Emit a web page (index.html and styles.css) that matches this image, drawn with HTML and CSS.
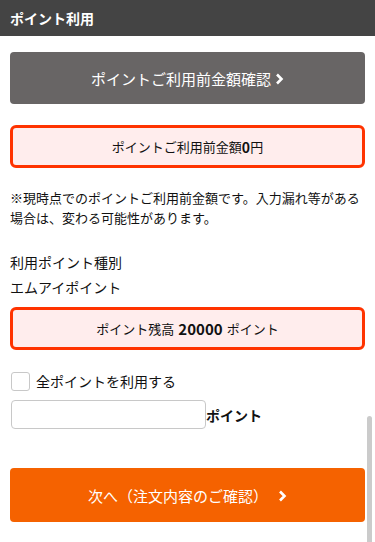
FILE: index.html
```html
<!DOCTYPE html>
<html lang="ja">
<head>
<meta charset="utf-8">
<title>ポイント利用</title>
<link rel="stylesheet" href="styles.css">
</head>
<body>
<div class="page">
  <header class="head">ポイント利用</header>
  <main class="content">
    <button class="btn btn-gray" type="button">ポイントご利用前金額確認<svg class="chev" viewBox="0 0 9 12" width="9" height="12"><polyline points="2,1.5 6.5,6 2,10.5" fill="none" stroke="#fff" stroke-width="2.6"/></svg></button>
    <div class="notice notice-amount">ポイントご利用前金額<span class="num">0</span>円</div>
    <p class="note">※現時点でのポイントご利用前金額です。入力漏れ等がある場合は、変わる可能性があります。</p>
    <p class="label">利用ポイント種別</p>
    <p class="label">エムアイポイント</p>
    <div class="notice notice-balance">ポイント残高 <span class="big">20000</span> ポイント</div>
    <label class="check-row"><span class="check"></span>全ポイントを利用する</label>
    <div class="input-row"><input class="point-input" type="text"><span class="unit">ポイント</span></div>
    <button class="btn btn-orange" type="button">次へ（注文内容のご確認）<svg class="chev chev-wide" viewBox="0 0 9 12" width="9" height="12"><polyline points="2,1.5 6.5,6 2,10.5" fill="none" stroke="#fff" stroke-width="2.6"/></svg></button>
  </main>
  <div class="scroll-thumb"></div>
</div>
</body>
</html>
```
FILE: styles.css
```css
* { box-sizing: border-box; }
html, body { margin: 0; padding: 0; }
body {
  font-family: "Noto Sans CJK JP", "Noto Sans", sans-serif;
  color: #111;
  background: #fff;
}
.page { position: relative; width: 375px; height: 542px; overflow: hidden; }
.head {
  height: 36px;
  background: #444;
  color: #fff;
  font-size: 14px;
  font-weight: bold;
  line-height: 36px;
  padding-left: 10px;
}
.content { padding: 0 10px; display: flex; flex-direction: column; }
.btn {
  border: 0;
  border-radius: 4px;
  color: #fff;
  font-family: inherit;
  font-size: 15px;
  display: flex;
  align-items: center;
  justify-content: center;
  width: 100%;
  padding: 0;
}
.btn-gray { margin-top: 16px; height: 52px; background: #686565; }
.btn-orange { margin-top: 39px; height: 54px; background: #f56200; }
.chev { margin-left: 4px; margin-top: 1px; }
.chev-wide { margin-left: 10px; }
.notice {
  height: 43px;
  border: 3px solid #ff3300;
  border-radius: 6px;
  background: #ffeded;
  display: flex;
  align-items: center;
  justify-content: center;
  font-size: 13px;
  color: #111;
}
.notice-amount { margin-top: 21px; }
.num { font-size: 14px; font-weight: bold; }
.notice-balance { margin-top: 7px; font-size: 13px; }
.big { font-size: 15px; font-weight: bold; margin: 0 4px; }
.note { margin: 20px 0 0; font-size: 13px; line-height: 20px; }
.label { margin: 0; font-size: 14px; line-height: 25px; }
.note + .label { margin-top: 22px; }
.check-row {
  margin-top: 21px;
  display: flex;
  align-items: center;
  font-size: 14px;
  line-height: 20px;
}
.check {
  width: 19px;
  height: 19px;
  border: 1px solid #c8c8c8;
  border-radius: 3px;
  margin-left: 1px;
  margin-right: 6px;
  background: #fff;
}
.input-row { margin-top: 9px; display: flex; align-items: center; }
.point-input {
  width: 195px;
  height: 29px;
  margin-left: 1px;
  border: 1px solid #c8c8c8;
  border-radius: 4px;
  font-size: 14px;
  padding: 0 6px;
}
.unit { font-size: 14px; font-weight: bold; }
.scroll-thumb {
  position: absolute;
  left: 367px;
  top: 416px;
  width: 5px;
  height: 140px;
  border-radius: 3px;
  background: #cbcbcb;
}
```
